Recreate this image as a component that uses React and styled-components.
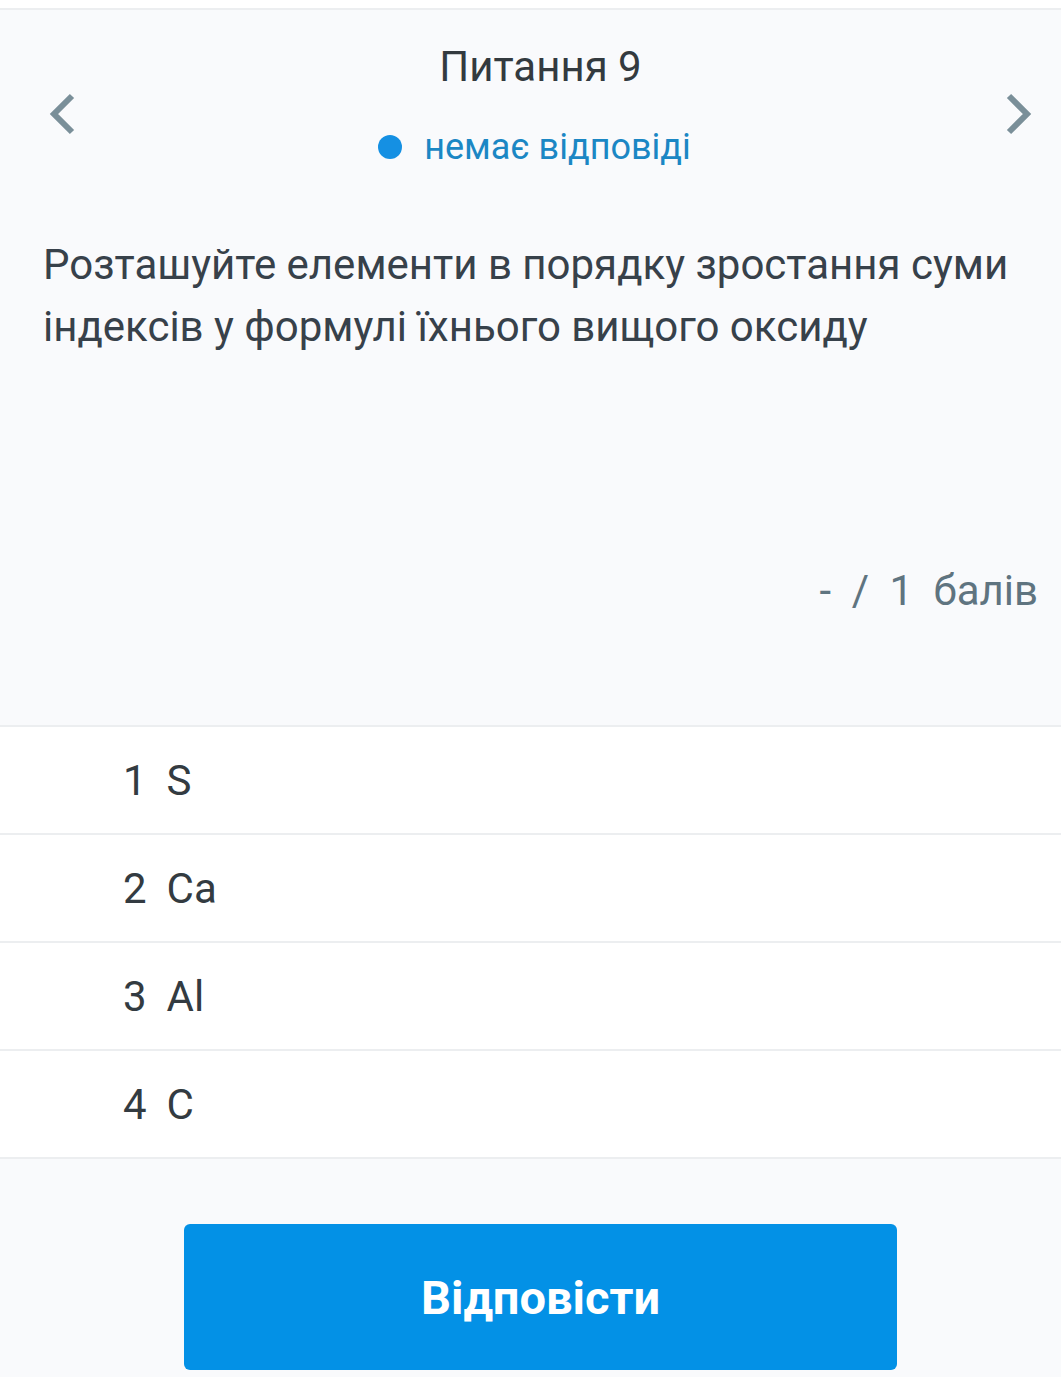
import React from "react";
import styled, { createGlobalStyle } from "styled-components";

const Global = createGlobalStyle`
  html, body { margin: 0; padding: 0; }
  body {
    background: #f9fafc;
    font-family: Roboto, "Noto Sans", "Liberation Sans", sans-serif;
    -webkit-font-smoothing: antialiased;
  }
`;

const Page = styled.div`
  width: 1061px;
  height: 1377px;
  background: #f9fafc;
  display: flex;
  flex-direction: column;
  overflow: hidden;
`;

const TopStrip = styled.div`
  height: 8px;
  background: #ffffff;
  border-bottom: 2px solid #eceef0;
`;

const Header = styled.div`
  display: grid;
  grid-template-columns: 1fr auto 1fr;
  align-items: center;
  padding: 33px 28px 0 48px;
`;

const NavButton = styled.button`
  border: 0;
  background: none;
  padding: 0;
  margin-top: 16px;
  display: flex;
  justify-self: ${(p) => (p.$side === "left" ? "start" : "end")};
  cursor: pointer;
`;

const HeaderCenter = styled.div`
  display: flex;
  flex-direction: column;
  align-items: center;
`;

const Title = styled.div`
  font-size: 42px;
  line-height: 48px;
  color: #333a3f;
`;

const Status = styled.div`
  margin-top: 34px;
  display: flex;
  align-items: center;
  gap: 22px;
  font-size: 36px;
  line-height: 44px;
  color: #1b87c4;
  margin-left: -12px;
`;

const Dot = styled.span`
  width: 24px;
  height: 24px;
  border-radius: 50%;
  background: #1590e3;
`;

const Question = styled.p`
  margin: 65px 0 0;
  padding: 0 43px;
  font-size: 42px;
  line-height: 62px;
  color: #37414a;
`;

const Score = styled.div`
  margin-top: 209px;
  padding-right: 23px;
  text-align: right;
  font-size: 42px;
  line-height: 48px;
  color: #5f7480;
  word-spacing: 10px;
`;

const List = styled.div`
  margin-top: 110px;
  border-top: 2px solid #eceef0;
  background: #ffffff;
`;

const Row = styled.div`
  height: 106px;
  border-bottom: 2px solid #eceef0;
  display: flex;
  align-items: center;
  gap: 20px;
  padding-left: 123px;
  font-size: 42px;
  color: #333b41;
`;

const Footer = styled.div`
  display: flex;
  justify-content: center;
  padding: 65px 0 0 20px;
`;

const AnswerButton = styled.button`
  width: 713px;
  height: 146px;
  border: 0;
  border-radius: 6px;
  background: #0391e6;
  color: #ffffff;
  font-family: Roboto, "Noto Sans", "Liberation Sans", sans-serif;
  font-size: 47px;
  font-weight: 700;
  cursor: pointer;
`;

const Chevron = ({ dir }) => (
  <svg width="28" height="42" viewBox="0 0 28 42" fill="none">
    <path
      d={dir === "left" ? "M24 3 L6 21 L24 39" : "M4 3 L22 21 L4 39"}
      stroke="#7a8f99"
      strokeWidth="6"
      strokeLinecap="butt"
      strokeLinejoin="miter"
    />
  </svg>
);

const items = [
  ["1", "S"],
  ["2", "Ca"],
  ["3", "Al"],
  ["4", "C"],
];

export default function App() {
  return (
    <Page>
      <Global />
      <TopStrip />
      <Header>
        <NavButton $side="left" aria-label="Попереднє">
          <Chevron dir="left" />
        </NavButton>
        <HeaderCenter>
          <Title>Питання 9</Title>
          <Status>
            <Dot />
            немає відповіді
          </Status>
        </HeaderCenter>
        <NavButton $side="right" aria-label="Наступне">
          <Chevron dir="right" />
        </NavButton>
      </Header>
      <Question>
        Розташуйте елементи в порядку зростання суми індексів у формулі їхнього
        вищого оксиду
      </Question>
      <Score>- / 1 балів</Score>
      <List>
        {items.map(([n, el]) => (
          <Row key={n}>
            <span>{n}</span>
            <span>{el}</span>
          </Row>
        ))}
      </List>
      <Footer>
        <AnswerButton>Відповісти</AnswerButton>
      </Footer>
    </Page>
  );
}
